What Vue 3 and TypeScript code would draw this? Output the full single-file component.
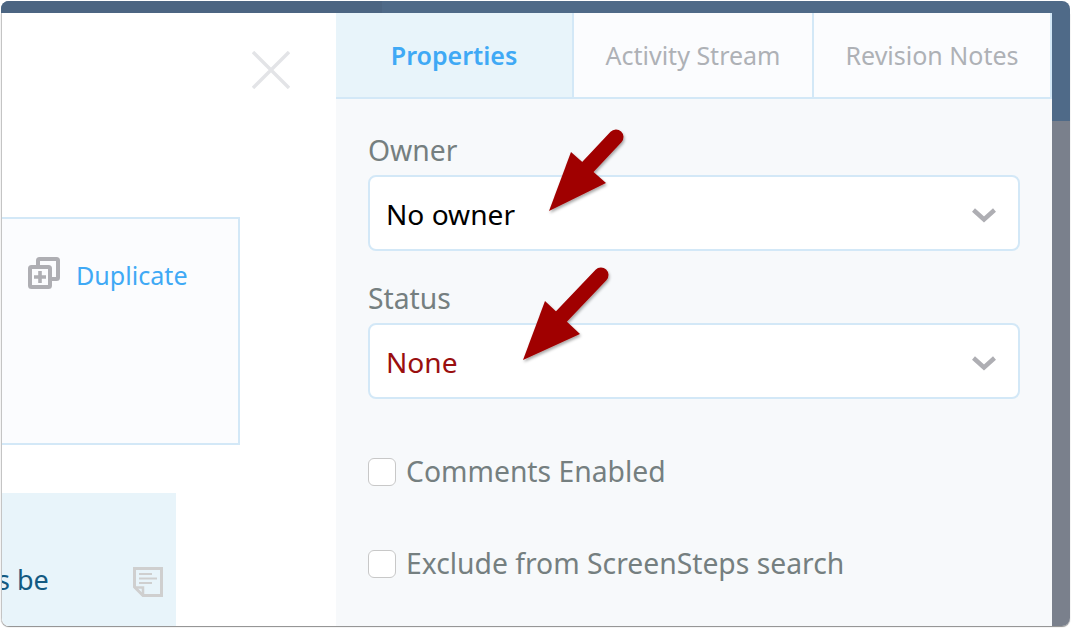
<script setup lang="ts">
const tabs = [
  { label: 'Properties', active: true },
  { label: 'Activity Stream', active: false },
  { label: 'Revision Notes', active: false },
]
const checks = ['Comments Enabled', 'Exclude from ScreenSteps search']
</script>

<template>
  <div class="window">
    <div class="topbar"><div class="topbar__dark"></div></div>
    <div class="main">
      <div class="left">
        <button class="close" aria-label="Close">
          <svg width="38" height="38" viewBox="0 0 38 38">
            <path d="M1 1L37 37M37 1L1 37" stroke="#e3e4e7" stroke-width="3.4" fill="none" />
          </svg>
        </button>
        <div class="dup-card">
          <svg class="dup-icon" width="32" height="32" viewBox="0 0 32 32">
            <path d="M10 8V3.500a1.500 1.500 0 0 1 1.500-1.500h17a1.500 1.500 0 0 1 1.500 1.500v17a1.500 1.500 0 0 1-1.500 1.500H24" fill="none" stroke="#aeaeb3" stroke-width="4" />
            <rect x="2" y="10" width="20" height="20" rx="1.500" fill="none" stroke="#aeaeb3" stroke-width="4" />
            <path d="M12 14v12M6 20h12" stroke="#aeaeb3" stroke-width="3.600" />
          </svg>
          <span class="dup-label">Duplicate</span>
        </div>
        <div class="note-card">
          <span class="note-text">s be</span>
          <svg class="note-icon" width="30" height="30" viewBox="0 0 30 30">
            <path d="M1.500 1.500h27v27H10L1.500 20z" fill="none" stroke="#cfcfcf" stroke-width="3" />
            <path d="M1.500 20.500H10v8" fill="none" stroke="#cfcfcf" stroke-width="2.500" />
            <path d="M6 7h13M6 11.500h18M6 16h13" stroke="#cfcfcf" stroke-width="1.800" />
          </svg>
        </div>
      </div>
      <div class="right">
        <div class="tabs">
          <div v-for="tab in tabs" :key="tab.label" class="tab" :class="{ 'tab--active': tab.active }">{{ tab.label }}</div>
        </div>
        <div class="panel">
          <label class="field-label">Owner</label>
          <div class="select">
            <span class="select__value">No owner</span>
            <svg class="select__chevron" width="26" height="16" viewBox="0 0 26 16"><path d="M2.500 3L13 12.500L23.500 3" fill="none" stroke="#aeaeb3" stroke-width="4.400" /></svg>
          </div>
          <label class="field-label field-label--second">Status</label>
          <div class="select">
            <span class="select__value select__value--none">None</span>
            <svg class="select__chevron" width="26" height="16" viewBox="0 0 26 16"><path d="M2.500 3L13 12.500L23.500 3" fill="none" stroke="#aeaeb3" stroke-width="4.400" /></svg>
          </div>
          <div class="checks">
            <div v-for="c in checks" :key="c" class="check">
              <span class="check__box"></span>
              <span class="check__label">{{ c }}</span>
            </div>
          </div>
        </div>
      </div>
      <div class="strip"></div>
    </div>

    <svg class="arrows" width="1072" height="628" viewBox="0 0 1072 628">
      <defs>
        <filter id="arrow-shadow" x="-20%" y="-20%" width="150%" height="150%">
          <feDropShadow dx="1" dy="2" stdDeviation="1.500" flood-color="#000" flood-opacity="0.35" />
        </filter>
      </defs>
      <g filter="url(#arrow-shadow)">
        <path class="arrow" d="M549 211L571 152L606 183Z" />
        <path class="arrow-shaft" d="M585 170L616 137" />
      </g>
      <g filter="url(#arrow-shadow)">
        <path class="arrow" d="M523 360L545 301L580 334Z" />
        <path class="arrow-shaft" d="M560 318L601 275" />
      </g>
    </svg>
  </div>
</template>

<style scoped>
.window {
  position: relative;
  width: 1072px;
  height: 628px;
  box-sizing: border-box;
  padding: 1px 2px 2px 1px;
  overflow: hidden;
  font-family: "Noto Sans", sans-serif;
}
.topbar {
  height: 12px;
  background: #4f6a88;
  border-radius: 8px 8px 0 0;
  display: flex;
}
.topbar__dark {
  width: 381px;
  background: #4c6582;
  border-radius: 8px 0 0 0;
}
.main {
  display: flex;
  height: 613px;
  border-left: 1px solid #c4c4c4;
  border-radius: 0 0 8px 8px;
  overflow: hidden;
  box-shadow: 0 1px 1px #8b8b8b;
}
.left {
  width: 334px;
  flex-shrink: 0;
  background: #fff;
  display: flex;
  flex-direction: column;
}
.close {
  align-self: flex-end;
  margin: 38px 46px 0 0;
  padding: 0;
  border: 0;
  background: none;
  height: 38px;
  display: flex;
}
.dup-card {
  width: 238px;
  height: 228px;
  box-sizing: border-box;
  margin-top: 128px;
  background: #fbfcfe;
  border: 2px solid #d3e8f7;
  border-left: 0;
  display: flex;
  align-items: flex-start;
  padding: 38px 0 0 26px;
}
.dup-icon {
  flex-shrink: 0;
}
.dup-label {
  margin-left: 16px;
  font-size: 25.100px;
  line-height: 36px;
  color: #3fa9f5;
}
.note-card {
  width: 174px;
  flex: 1;
  margin-top: 48px;
  background: #e8f4fa;
  display: flex;
  align-items: flex-end;
  justify-content: space-between;
  padding: 0 13px 29px 0;
  box-sizing: border-box;
  overflow: hidden;
}
.note-text {
  font-size: 27px;
  line-height: 36px;
  color: #135a82;
  margin: 0 0 -1px -5px;
}
.right {
  width: 716px;
  flex-shrink: 0;
  display: flex;
  flex-direction: column;
  background: #f7f9fb;
}
.tabs {
  display: grid;
  grid-template-columns: 238px 240px 1fr;
  height: 86px;
  box-sizing: border-box;
  border-bottom: 2px solid #d3e8f7;
  background: #fbfcfe;
}
.tab {
  display: flex;
  align-items: center;
  justify-content: center;
  font-size: 25px;
  color: #aeb1b6;
  border-right: 2px solid #d3e8f7;
}
.tab--active {
  background: #e8f4fa;
  color: #3fa9f5;
  font-weight: 600;
}
.panel {
  flex: 1;
  padding: 33px 32px 0;
  display: flex;
  flex-direction: column;
}
.field-label {
  font-size: 28.300px;
  line-height: 36px;
  color: #757f80;
}
.field-label--second {
  margin-top: 29px;
}
.select {
  height: 76px;
  box-sizing: border-box;
  margin-top: 7px;
  background: #fff;
  border: 2px solid #d3e8f7;
  border-radius: 8px;
  display: flex;
  align-items: center;
  justify-content: space-between;
  padding: 1px 21px 0 16px;
}
.select__chevron {
  margin-top: 3px;
}
.select__value {
  font-size: 28.100px;
  color: #000;
}
.select__value--none {
  color: #9a0f0f;
}
.checks {
  margin-top: 59px;
  display: flex;
  flex-direction: column;
  gap: 64px;
}
.check {
  display: flex;
  align-items: center;
  height: 28px;
  gap: 10px;
}
.check__box {
  width: 28px;
  height: 28px;
  box-sizing: border-box;
  background: #fff;
  border: 1.500px solid #c8c8c8;
  border-radius: 6px;
  flex-shrink: 0;
}
.check__label {
  font-size: 28.300px;
  color: #757f80;
  white-space: nowrap;
  margin-bottom: 2px;
}
.strip {
  flex: 1;
  background: linear-gradient(#4f6a88 0, #4f6a88 108px, #7a808c 108px);
}
.arrows {
  position: absolute;
  left: 0;
  top: 0;
  pointer-events: none;
}
.arrow {
  fill: #a00000;
}
.arrow-shaft {
  fill: none;
  stroke: #a00000;
  stroke-width: 15;
  stroke-linecap: round;
}
</style>

<style>
html, body { background: #fff; }
</style>
